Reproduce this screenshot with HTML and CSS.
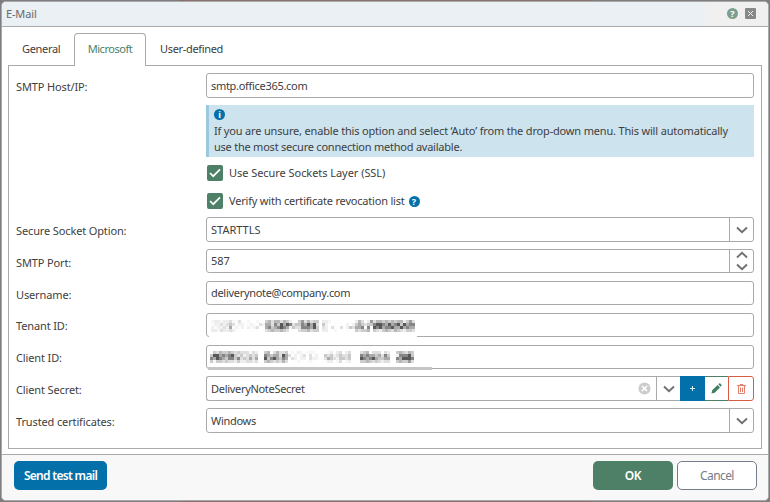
FILE: index.html
```
<!DOCTYPE html>
<html lang="en"><head><meta charset="utf-8"><title>E-Mail</title><link rel="stylesheet" href="styles.css"></head>
<body>
<svg width="0" height="0" class="defs"><symbol id="down" viewBox="0 0 12 8"><path d="M1 1.5 6 6.3 11 1.5" fill="none" stroke="#707070" stroke-width="1.9"/></symbol></svg>
<main class="dialog">
<header class="titlebar"><h1>E-Mail</h1><div class="tools"><b class="badge help">?</b><button class="close" aria-label="Close"><svg width="11" height="11" viewBox="0 0 11 11"><path d="M3 3l5 5M8 3l-5 5" stroke="#eee"/></svg></button></div></header>
<section class="body">
<nav class="tabs"><span class="tab general">General</span><span class="tab active">Microsoft</span><span class="tab user">User-defined</span></nav>
<form class="panel">
<div class="row"><label>SMTP Host/IP:</label><div class="field"><span>smtp.office365.com</span></div></div>
<aside class="info"><b class="badge">i</b><p><span class="line1">If you are unsure, enable this option and select ‘Auto’ from the drop-down menu. This will automatically</span><br><span class="line2">use the most secure connection method available.</span></p></aside>
<div class="check"><svg class="box" viewBox="0 0 16 16"><rect width="16" height="16" rx="2"/><path d="M3 8l3.2 3.2L13 4.4"/></svg><span class="ssl">Use Secure Sockets Layer (SSL)</span></div>
<div class="check"><svg class="box" viewBox="0 0 16 16"><rect width="16" height="16" rx="2"/><path d="M3 8l3.2 3.2L13 4.4"/></svg><span>Verify with certificate revocation list</span><b class="badge">?</b></div>
<div class="row"><label>Secure Socket Option:</label><div class="field"><span class="caps">STARTTLS</span><i class="arrow"><svg width="12" height="8"><use href="#down"/></svg></i></div></div>
<div class="row short"><label>SMTP Port:</label><div class="field"><span class="caps">587</span><i class="arrow spin"><svg class="up" width="12" height="8"><use href="#down"/></svg><svg width="12" height="8"><use href="#down"/></svg></i></div></div>
<div class="row short"><label>Username:</label><div class="field"><span>deliverynote@company.com</span></div></div>
<div class="row short tenant"><label>Tenant ID:</label><div class="field masked"><svg class="mosaic" id="tenant" width="208" height="18"></svg></div></div>
<div class="row short client"><label>Client ID:</label><div class="field masked"><svg class="mosaic" id="client" width="224" height="18"></svg></div></div>
<div class="row"><label>Client Secret:</label><div class="field split"><div class="value"><span>DeliveryNoteSecret</span><svg class="clear" width="13" height="13"><circle cx="6.5" cy="6.5" r="6" fill="#ccc"/><path d="M4 4l5 5M9 4l-5 5" stroke="#fff" stroke-width="1.7"/></svg><i class="arrow"><svg width="12" height="8"><use href="#down"/></svg></i></div><i class="act add"><svg width="5" height="5"><path d="M2.5 0v5M0 2.5h5" stroke="#d9edf7"/></svg></i><i class="act edit"><svg width="11" height="11" viewBox="0 0 11 11"><path d="M.5 10.5l.7-3.2L6.6 2l2.4 2.4-5.3 5.4zM7.3 1.3l.9-.8q.6-.4 1.1.1l1.1 1.1q.5.6 0 1.1l-.8.9z" fill="#3f805f"/></svg></i><i class="act del"><svg width="9" height="10" viewBox="0 0 9 10"><path d="M0 1.5h9M3 1.5v-1h3v1M1.5 2v7.5h6V2M3.5 3.5v4.5M5.5 3.5v4.5" fill="none" stroke="#e6806d"/></svg></i></div></div>
<div class="row"><label>Trusted certificates:</label><div class="field"><span>Windows</span><i class="arrow"><svg width="12" height="8"><use href="#down"/></svg></i></div></div>
</form></section>
<footer><button class="test">Send test mail</button><button class="ok">OK</button><button class="cancel">Cancel</button></footer>
</main><script src="mosaic.js"></script></body></html>
```
FILE: mosaic.js
```
// Paints the redacted identifiers: each digit is the darkness of one 3px cell.
const masks = {
  tenant: [
    "23323342140120021056466465301574645503320010000036403746656565663574",
    "12232343122112103255364757634465757304200100020245434467765756747566",
    "21223251212021230156456765243366657403203103024355616176756675575655",
    "33243343110011010145655654001455645503300201010154556054356546543554"
  ],
  client: [
    "05465565454442430056046445021320222101123034034000456044404300565465",
    "47756567434234340065455375302023031200434234334000656554536400266674",
    "65765466463435350074675465032022032211354324434000765675445500657776",
    "52554544353344340056545464011210121001133024023000556545434400565574"
  ]
};
for (const [id, rows] of Object.entries(masks)) {
  const svg = document.getElementById(id);
  rows.forEach((row, y) => [...row].forEach((n, x) => {
    if (n === "0") return;
    const r = document.createElementNS("http://www.w3.org/2000/svg", "rect");
    const edge = y === 0 || y === 3 ? 0.6 : 1;
    const v = Math.round(255 - n * n * 3.4 * edge);
    r.setAttribute("x", 2 + x * 3);
    r.setAttribute("y", y * 3);
    r.setAttribute("width", 3);
    r.setAttribute("height", 3);
    r.setAttribute("fill", `rgb(${v},${v},${v})`);
    svg.append(r);
  }));
}
```
FILE: styles.css
```
*{box-sizing:border-box}
body{margin:0;height:502px;background:linear-gradient(90deg,#7e7e82 0 179px,#8b716b 179px 591px,#7e7e7e 591px);padding:1px;font:11px/16px "Noto Sans",sans-serif;color:#404040;overflow:hidden}
button{font:inherit;padding:0;border:0}
i{font-style:normal}
.defs{position:absolute}
.dialog{height:500px;background:#fff;border:1px solid #a9a9a9;border-radius:5px;display:flex;flex-direction:column;overflow:hidden}
.titlebar{height:25px;flex:none;background:linear-gradient(90deg,#ebf0f4 0 700px,#f0f0f0 706px);border-bottom:1px solid #aaa;display:flex;justify-content:space-between;padding:0 12px 0 4px;align-items:center}
.titlebar h1{font:inherit;margin:0;color:#65696d;letter-spacing:-.15px}
.tools{display:flex;gap:7px;align-items:center;margin-top:-1px}
.badge{width:11px;height:11px;border-radius:50%;background:#0370a9;color:#fff;font:bold 9px/11px "Noto Sans",sans-serif;letter-spacing:0;text-align:center;flex:none;display:block}
.help{background:#7c9f8d}
.close{width:11px;height:11px;background:#888;border-radius:1px;display:flex}
.body{height:427px;padding:6px 6px 0}
.tabs{display:flex;height:32px;position:relative;z-index:1;align-items:stretch;letter-spacing:-.33px}
.tab{line-height:32px;white-space:nowrap}
.general{width:66px;padding-left:14px}
.active{width:72px;height:33px;border:1px solid #aaa;border-bottom:0;border-radius:4px 4px 0 0;background:#fff;color:#4d8066;text-align:center;line-height:30px;letter-spacing:-.45px}
.user{padding-left:14px}
.panel{border:1px solid #aaa;margin:0;padding:7px 7px 0 7px;height:384px}
.row{display:flex;height:25px;margin-bottom:7px}
.short{height:24px;margin-bottom:8px}
.client{margin-bottom:7px}
.row label{width:190px;padding-top:6px;letter-spacing:-.13px}
.tenant label,.client label{padding-top:5px}
.field{flex:1;border:1px solid #aaa;border-radius:3px;padding-left:4px;display:flex;align-items:center;justify-content:space-between;min-width:0;letter-spacing:-.3px}
.caps{letter-spacing:0}
.arrow{width:24px;border-left:1px solid #aaa;display:flex;align-items:center;justify-content:center;align-self:stretch}
.spin{flex-direction:column;gap:4px}
.up{transform:rotate(180deg)}
.split{border:0;padding:0}
.value{flex:1;display:flex;align-items:center;align-self:stretch;border:1px solid #aaa;border-right:0;border-radius:3px 0 0 3px;padding-left:4px}
.clear{margin-left:auto;margin-right:5px}
.act{display:flex;align-items:center;justify-content:center;align-self:stretch}
.add{width:25px;background:#0370a9}
.edit{width:23px;border:solid #4d8066;border-width:1px 0}
.del{width:26px;border:1px solid #d85b43;border-radius:0 3px 3px 0}
.masked{position:relative}
.mosaic{position:absolute;left:2px;top:6px;background:#fff}
.client .mosaic{left:1px;top:5px;border-bottom:3px solid #c5c5c5;height:19px}
.info{margin:0 0 8px 190px;height:52px;background:#cde3ee;border-left:3px solid #9ac8de;padding:4px 0 0 5px}
.info p{margin:3px 0 0;white-space:nowrap;line-height:16px}
.line1{letter-spacing:-.175px}
.line2{letter-spacing:-.23px}
.box{width:16px;height:16px;fill:#4d8066;flex:none;margin-right:6px}
.box path{fill:none;stroke:#fff;stroke-width:1.7}
.check{margin:0 0 12px 191px;display:flex;align-items:center;height:16px;letter-spacing:-.2px}
.ssl{letter-spacing:-.05px}
.check+.row{margin-top:-4px}
.check .badge{margin-left:4px}
footer{flex:1;border-top:1px solid #aaa;background:#f8f8f8;display:flex;padding:6px 11px 0 12px;align-items:flex-start}
footer button{height:29px;border-radius:5px;font:12px/29px "Noto Sans",sans-serif}
.test{width:93px;background:#0370a9;color:#fff;font-weight:600;letter-spacing:-.7px}
.ok{width:80px;background:#4d8066;color:#fff;margin-left:auto;font-weight:600;letter-spacing:-.3px}
.cancel{width:80px;border:1px solid #747d89;background:#fff;color:#747d89;line-height:27px;margin-left:4px;letter-spacing:-.6px}
```
